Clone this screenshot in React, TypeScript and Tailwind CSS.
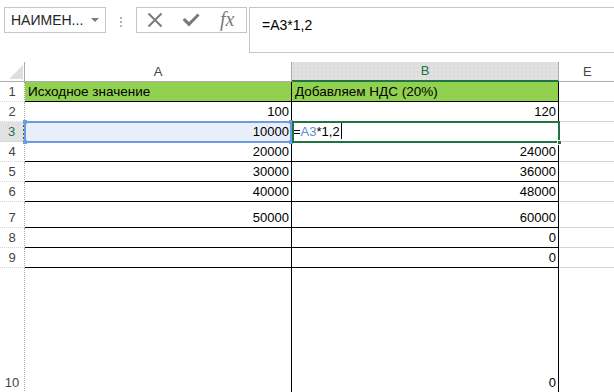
import React from "react";

const rowHeights = [20, 20, 20, 20, 20, 20, 26, 20, 20, 125];
const colA = ["Исходное значение", "100", "10000", "20000", "30000", "40000", "50000", "", "", ""];
const colB = ["Добавляем НДС (20%)", "120", "", "24000", "36000", "48000", "60000", "0", "0", "0"];

export default function App() {
  return (
    <div className="relative w-[614px] h-[392px] overflow-hidden bg-white font-['Liberation_Sans',sans-serif] text-black">
      {/* top bar */}
      <div className="h-[62px] flex items-start pt-[7px]">
        <div className="ml-[4px] w-[102px] h-[26px] border border-[#c6c6c6] flex items-center pl-[6px] pr-[6px]">
          <span className="text-[14px] text-[#262626] leading-none">НАИМЕН...</span>
          <svg className="ml-auto" width="8" height="5" viewBox="0 0 8 5">
            <path d="M0 0 L8 0 L4 4 Z" fill="#7a7a7a" />
          </svg>
        </div>
        <div className="ml-[14px] mt-[10px] w-[2px] flex flex-col gap-[2px]">
          <div className="w-[2px] h-[2px] bg-[#b5b5b5]" />
          <div className="w-[2px] h-[2px] bg-[#b5b5b5]" />
          <div className="w-[2px] h-[2px] bg-[#b5b5b5]" />
        </div>
        <div className="ml-[14px] w-[111px] h-[26px] border border-[#c6c6c6] flex items-center">
          <svg className="ml-[10px]" width="16" height="16" viewBox="0 0 16 16">
            <path d="M1.5 1.5 L14.5 14.5 M14.5 1.5 L1.5 14.5" stroke="#7a7a7a" strokeWidth="2" />
          </svg>
          <svg className="ml-[19px]" width="18" height="14" viewBox="0 0 18 14">
            <path d="M0.5 7 L3 5 L7 9 L15.5 0.5 L17.5 2.5 L7 13.5 Z" fill="#7a7a7a" />
          </svg>
          <span className="ml-[20px] font-['Liberation_Serif',serif] italic text-[20px] leading-none text-[#7a7a7a] -mt-[3px]">fx</span>
        </div>
        <div className="ml-[2px] flex-1 h-[46px] border border-r-0 border-[#c6c6c6] pl-[12px] pt-[5px]">
          <span className="text-[14px] leading-none text-black">=A3*1,2</span>
        </div>
      </div>

      {/* grid */}
      <div className="grid grid-cols-[25px_267px_267px_1fr]">
        {/* header row */}
        <div className="h-[20px] border-r border-b border-[#ababab] relative">
          <svg className="absolute left-[9px] top-[3px]" width="14" height="14" viewBox="0 0 14 14">
            <path d="M14 0 L14 14 L0 14 Z" fill="#dfdfdf" />
          </svg>
        </div>
        <div className="h-[20px] border-r border-b border-[#ababab] flex items-center justify-center text-[13px] text-[#444]">A</div>
        <div className="h-[20px] border-r border-[#ababab] border-b-2 border-b-[#217346] bg-[#e1e1e1] flex items-center justify-center text-[13px] text-[#217346] bg-[radial-gradient(#cfcfcf_0.6px,transparent_0.8px)] bg-[length:4px_4px]">B</div>
        <div className="h-[20px] border-b border-[#ababab] flex items-center pl-[24px] text-[13px] text-[#444]">E</div>

        {rowHeights.map((h, i) => {
          const isHeader = i === 0;
          const sel = i === 2;
          const rowH = { height: h };
          return (
            <React.Fragment key={i}>
              <div
                style={rowH}
                className={
                  sel
                    ? "bg-[#e1e1e1] border-r-2 border-r-[#217346] border-b border-b-[#d4d4d4] border-dotted flex items-end justify-center pb-[2px] text-[13px] leading-[15px] text-[#217346]"
                    : "border-r border-r-[#ababab] border-b border-b-[#d4d4d4] border-dotted flex items-end justify-center pb-[2px] text-[13px] leading-[15px] text-[#444]"
                }
              >
                {i + 1}
              </div>
              <div
                style={rowH}
                className={
                  (isHeader ? "bg-[#92d050] justify-start pl-[3px] text-[13.5px] " : "justify-end pr-[2px] text-[13px] ") +
                  (sel ? "bg-[#e8eefa] " : "") +
                  "border-r border-b border-black flex items-end pb-[2px] leading-[15px] whitespace-nowrap"
                }
              >
                {colA[i]}
              </div>
              <div
                style={rowH}
                className={
                  (isHeader ? "bg-[#92d050] justify-start pl-[3px] text-[13.5px] " : "justify-end pr-[2px] text-[13px] ") +
                  "border-r border-b border-black flex items-end pb-[2px] leading-[15px] whitespace-nowrap"
                }
              >
                {sel ? (
                  <span className="mr-auto pl-[1px]">
                    =<span className="text-[#5b8fd6]">A3</span>*1,2
                    <span className="inline-block w-[1px] h-[16px] bg-black align-[-3px] ml-[1px]" />
                  </span>
                ) : (
                  colB[i]
                )}
              </div>
              <div style={rowH} className="border-b border-[#d4d4d4]" />
            </React.Fragment>
          );
        })}
      </div>

      {/* A3 reference highlight */}
      <div className="absolute left-[24px] top-[121px] w-[268px] h-[22px] border-2 border-[#6b9be0] pointer-events-none">
        <div className="absolute -left-[3px] -top-[3px] w-[4px] h-[4px] bg-[#6b9be0]" />
        <div className="absolute -right-[3px] -top-[3px] w-[4px] h-[4px] bg-[#6b9be0]" />
        <div className="absolute -left-[3px] -bottom-[3px] w-[4px] h-[4px] bg-[#6b9be0]" />
        <div className="absolute -right-[3px] -bottom-[3px] w-[4px] h-[4px] bg-[#6b9be0]" />
      </div>
      {/* B3 active cell */}
      <div className="absolute left-[292px] top-[121px] w-[268px] h-[22px] border-2 border-[#217346] pointer-events-none">
        <div className="absolute -right-[4px] -bottom-[4px] w-[5px] h-[5px] bg-[#217346] border border-white" />
      </div>
    </div>
  );
}
